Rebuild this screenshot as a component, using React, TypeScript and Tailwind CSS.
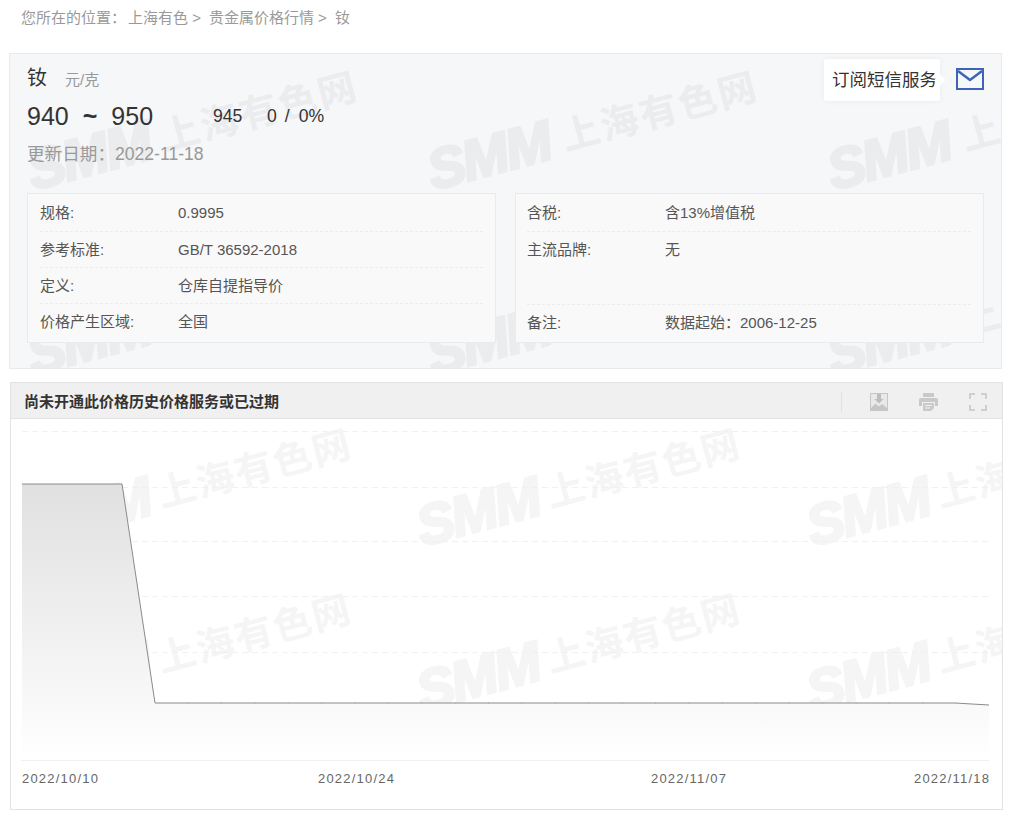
const FONT = 'font-["Liberation_Sans","Noto_Sans_CJK_SC",sans-serif]'

const leftRows = [
  ['规格:', '0.9995'],
  ['参考标准:', 'GB/T 36592-2018'],
  ['定义:', '仓库自提指导价'],
  ['价格产生区域:', '全国'],
]

// page x of the 33px data points on the flat part of the line
const ticks = Array.from({ length: 24 }, (_, i) => 188 + i * 33.4)

function Watermark({ x, y, light }: { x: number; y: number; light?: boolean }) {
  return (
    <div
      className={`absolute flex items-end whitespace-nowrap origin-[0_100%] -rotate-[15deg] ${light ? 'text-[#f5f5f5]' : 'text-[#ebecee]'}`}
      style={{ left: x, top: y }}
    >
      <span className="text-[56px] leading-[50px] font-bold italic tracking-[-2px] [-webkit-text-stroke:3px_currentColor]">SMM</span>
      <span className={`text-[38px] leading-[46px] font-bold ${light ? 'ml-[9px] tracking-[2px]' : 'ml-[13px] tracking-[2.500px]'}`}>上海有色网</span>
    </div>
  )
}

function InfoRow({ label, value, tall, last }: { label: string; value: string; tall?: boolean; last?: boolean }) {
  return (
    <div className={`flex pt-[8px] first:pt-[7px] text-[15px] text-[#555] ${tall ? 'h-[73px]' : 'h-9'} ${last ? '' : 'border-b border-dashed border-[#ececec]'}`}>
      <span className="w-[138px] leading-5">{label}</span>
      <span className="leading-5">{value}</span>
    </div>
  )
}

function ImageIcon() {
  return (
    <svg width="18" height="18" viewBox="0 0 18 18">
      <rect x="0.500" y="0.500" width="17" height="17" fill="#e9e9e9" stroke="#c6c6c6" />
      <path fill="#bdbdbd" d="M7 1h4v5h2.500L9 10.500 4.500 6H7z" />
      <path fill="#c6c6c6" d="M1 17v-2l4.500-4.500L9 13.500l3-2.500 5 4v2z" />
    </svg>
  )
}

function PrintIcon() {
  return (
    <svg width="19" height="18" viewBox="0 0 19 18">
      <path fill="#c9c9c9" d="M4 0h11v4H4zM1.500 5h16A1.500 1.500 0 0 1 19 6.500V13h-3V9H3v4H0V6.500A1.500 1.500 0 0 1 1.500 5z" />
      <path fill="#c9c9c9" d="M4 10h11v5l-3 3H4zm2 2v1h7v-1zm0 2.500v1h5v-1z" fillRule="evenodd" />
    </svg>
  )
}

function FullIcon() {
  return (
    <svg width="18" height="18" viewBox="0 0 18 18" fill="none" stroke="#cfcfcf" strokeWidth="2">
      <path d="M1 6V1h5M12 1h5v5M17 12v5h-5M6 17H1v-5" />
    </svg>
  )
}

function Chart() {
  const toY = (y: number) => y - 419
  const toX = (x: number) => x - 11
  const line = [[22, 484], [122, 484], [155, 703], [955, 703], [989, 705]]
    .map(([x, y]) => `${toX(x)},${toY(y)}`)
    .join(' ')
  return (
    <svg className="relative block" width="991" height="390" viewBox="0 0 991 390">
      <defs>
        <linearGradient id="area" x1="0" y1="0" x2="0" y2="1">
          <stop offset="0" stopColor="#e0e0e0" />
          <stop offset="1" stopColor="#ffffff" />
        </linearGradient>
      </defs>
      {[431, 487, 541, 596, 652].map(y => (
        <line key={y} x1={toX(22)} x2={toX(989)} y1={toY(y) + 0.5} y2={toY(y) + 0.5} stroke="#f0f0f0" strokeDasharray="6 4" />
      ))}
      <polygon points={`${line} ${toX(989)},${toY(760)} ${toX(22)},${toY(760)}`} fill="url(#area)" />
      <polyline points={line} fill="none" stroke="#8a8a8a" strokeWidth="1" />
      {ticks.map(x => (
        <line key={x} x1={toX(x)} x2={toX(x)} y1={toY(702)} y2={toY(704)} stroke="#b5b5b5" />
      ))}
      <line x1={toX(21)} x2={toX(989)} y1={toY(760) + 0.5} y2={toY(760) + 0.5} stroke="#efefef" />
      <g fontSize="13" letterSpacing="1.2" fill="#666">
        <text x={toX(22)} y={toY(783)}>2022/10/10</text>
        <text x={toX(318)} y={toY(783)}>2022/10/24</text>
        <text x={toX(651)} y={toY(783)}>2022/11/07</text>
        <text x={toX(914)} y={toY(783)}>2022/11/18</text>
      </g>
    </svg>
  )
}

export default function App() {
  return (
    <div className={`${FONT} w-[1011px] h-[818px] bg-white overflow-hidden`}>
      {/* Breadcrumb */}
      <div className="h-[53px] pl-[21px] pt-2 text-[15px] leading-5 text-[#999]">
        您所在的位置：<span className="ml-[2px]">上海有色 &gt;</span>
        <span className="ml-2">贵金属价格行情 &gt;</span>
        <span className="ml-2">钕</span>
      </div>

      {/* Price panel */}
      <div className="relative ml-[9px] w-[993px] h-[316px] bg-[#f6f7f9] border border-[#e9eaec] overflow-hidden">
        {[25, 425, 825].map(x => (
          <div key={x}>
            <Watermark x={x} y={92} />
            <Watermark x={x} y={277} />
          </div>
        ))}

        <div className="relative pl-[17px] pr-[17px]">
          <div className="flex justify-between">
            <div>
              <div className="flex items-baseline pt-[10px] h-[38px]">
                <span className="text-xl leading-7 text-[#333]">钕</span>
                <span className="ml-[18px] text-[15px] text-[#999]">元/克</span>
              </div>
              <div className="flex items-center mt-2 h-[32px] text-[#333]">
                <span className="w-[186px] text-[25px] leading-8 whitespace-nowrap">
                  940<span className="mx-[14px] font-bold">~</span>950
                </span>
                <span className="w-[54px] text-[17.6px]">945</span>
                <span className="text-[17.6px] whitespace-nowrap">
                  0<span className="ml-2 mr-[9px]">/</span>0%
                </span>
              </div>
              <div className="mt-[10px] text-[17.6px] leading-6 text-[#999]">更新日期：2022-11-18</div>
            </div>

            <div className="flex items-start pt-[5px]">
              <div className="relative flex items-center h-[42px] w-[116px] pl-2 rounded-[3px] bg-white text-[17.5px] whitespace-nowrap text-[#333] shadow-[0_0_6px_rgba(0,0,0,0.05)]">
                订阅短信服务
                <span className="absolute -right-[4px] top-[17px] size-2 rotate-45 bg-white" />
              </div>
              <svg className="ml-4 mt-[9px]" width="28" height="22" viewBox="0 0 28 22" fill="none" stroke="#3d64b8">
                <rect x="1" y="1" width="26" height="20" strokeWidth="2" />
                <path d="M2 3l12 9 12-9" strokeWidth="2.500" />
              </svg>
            </div>
          </div>

          <div className="flex justify-between mt-[27px]">
            <div className="w-[469px] h-[150px] pt-[2px] px-3 bg-[#f9f9fa] border border-[#e9ebed]">
              {leftRows.map(([label, value], i) => (
                <InfoRow key={label} label={label} value={value} last={i === leftRows.length - 1} />
              ))}
            </div>
            <div className="w-[469px] h-[150px] pt-[2px] pl-[11px] pr-3 bg-[#f9f9fa] border border-[#e9ebed]">
              <InfoRow label="含税:" value="含13%增值税" />
              <InfoRow label="主流品牌:" value="无" tall />
              <InfoRow label="备注:" value="数据起始：2006-12-25" last />
            </div>
          </div>
        </div>
      </div>

      {/* History chart */}
      <div className="mt-[13px] ml-[10px] w-[993px] h-[428px] border border-[#e3e3e3]">
        <div className="flex items-center h-[36px] pl-[13px] pt-[3px] bg-[#f0f0f0] border-b border-[#e3e3e3]">
          <span className="flex-1 text-[15px] font-bold text-[#333]">尚未开通此价格历史价格服务或已过期</span>
          <span className="h-5 border-l border-[#e0e0e0]" />
          <div className="flex items-center gap-[31px] ml-[28px] mr-[15px]">
            <ImageIcon />
            <PrintIcon />
            <FullIcon />
          </div>
        </div>
        <div className="relative h-[390px] overflow-hidden">
          {[24, 413, 803].map(x => (
            <div key={x}>
              <Watermark x={x} y={83} light />
              <Watermark x={x} y={248} light />
            </div>
          ))}
          <Chart />
        </div>
      </div>
    </div>
  )
}
